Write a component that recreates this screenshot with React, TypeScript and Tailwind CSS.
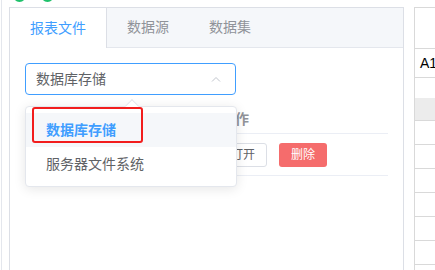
import type { ReactNode } from 'react';

// ─── Правая панель: строки таблицы ──────
const GRID_ROWS = [0, 1, 2, 3, 4, 5];

const font = "font-['Liberation_Sans','Noto_Sans_CJK_SC',sans-serif]";

const Tab = ({ active, children }: { active?: boolean; children: ReactNode }) => (
  <div
    className={`h-[39px] px-5 flex items-center text-[14px] ${
      active
        ? 'bg-white text-[#409eff] border-r border-[#dcdfe6] -mb-px h-[40px]'
        : 'text-[#909399]'
    }`}
  >
    {children}
  </div>
);

export default function App() {
  return (
    <div className={`relative w-[435px] h-[270px] overflow-hidden bg-white ${font}`}>
      {/* зелёные кружки сверху */}
      <div className="absolute left-[13px] -top-[11px] w-[13px] h-[13px] rounded-full bg-[#1fc16b]" />
      <div className="absolute left-[41px] -top-[11px] w-[13px] h-[13px] rounded-full bg-[#1fc16b]" />

      <div className="flex h-full pt-[7px]">
        {/* левая колонка */}
        <div className="ml-[1px] border-l border-[#e4e7ed] h-[270px] -mt-[7px] pt-[7px] pl-[7px]">
          <div className="w-[395px] h-[280px] border border-[#dcdfe6] bg-white">
            <div className="flex bg-[#f5f7fa] border-b border-[#e4e7ed] h-[40px]">
              <Tab active>报表文件</Tab>
              <Tab>数据源</Tab>
              <Tab>数据集</Tab>
            </div>

            <div className="p-[15px]">
              <div className="w-[211px] h-[32px] rounded border border-[#409eff] flex items-center justify-between pl-[10px] pr-[14px]">
                <span className="text-[14px] text-[#606266]">数据库存储</span>
                <svg width="10" height="6" viewBox="0 0 10 6" fill="none">
                  <path d="M1 5.5L5 1.5L9 5.5" stroke="#c0c4cc" strokeWidth="1" />
                </svg>
              </div>

              {/* таблица */}
              <div className="mt-[10px] w-[363px]">
                <div className="h-[29px] border-b border-[#ebeef5] flex items-center pl-[196px] text-[14px] text-[#909399] font-semibold">
                  操作
                </div>
                <div className="h-[42px] border-b border-[#ebeef5] flex items-center gap-[12px] pl-[194px]">
                  <div className="w-[48px] h-[24px] border border-[#dcdfe6] rounded-[3px] flex items-center justify-center text-[12px] text-[#606266]">
                    打开
                  </div>
                  <div className="w-[48px] h-[24px] bg-[#f56c6c] rounded-[3px] flex items-center justify-center text-[12px] text-white">
                    删除
                  </div>
                </div>
              </div>
            </div>
          </div>
        </div>

        {/* правая панель */}
        <div className="ml-[10px] flex-1 border-l border-t border-[#d9d9d9] text-[14px]">
          <div className="h-[41px] border-b border-[#d9d9d9]" />
          <div className="h-[29px] border-b border-[#d9d9d9] flex items-center pl-[5px] text-black">A1</div>
          <div className="h-[20px]" />
          <div className="h-[23px] bg-[#ececec] border-b border-[#d9d9d9]" />
          {GRID_ROWS.map((r) => (
            <div key={r} className="h-[24px] border-b border-[#d9d9d9]" />
          ))}
        </div>
      </div>

      {/* выпадающий список */}
      <div className="absolute left-[25px] top-[106px] w-[212px] h-[81px] bg-white border border-[#e4e7ed] rounded shadow-[0_2px_12px_0_rgba(0,0,0,0.1)] py-[6px]">
        <div className="absolute -top-[6px] left-[101px] w-[10px] h-[10px] bg-white border-l border-t border-[#e4e7ed] rotate-45" />
        <div className="relative h-[34px] bg-[#f5f7fa] flex items-center pl-[20px] text-[14px] font-bold text-[#409eff]">
          数据库存储
        </div>
        <div className="h-[34px] flex items-center pl-[20px] text-[14px] text-[#606266]">
          服务器文件系统
        </div>
      </div>

      {/* красная рамка-аннотация */}
      <div className="absolute left-[32px] top-[107px] w-[111px] h-[36px] border-[2.5px] border-[#f21d1d] rounded-[3px]" />
    </div>
  );
}
